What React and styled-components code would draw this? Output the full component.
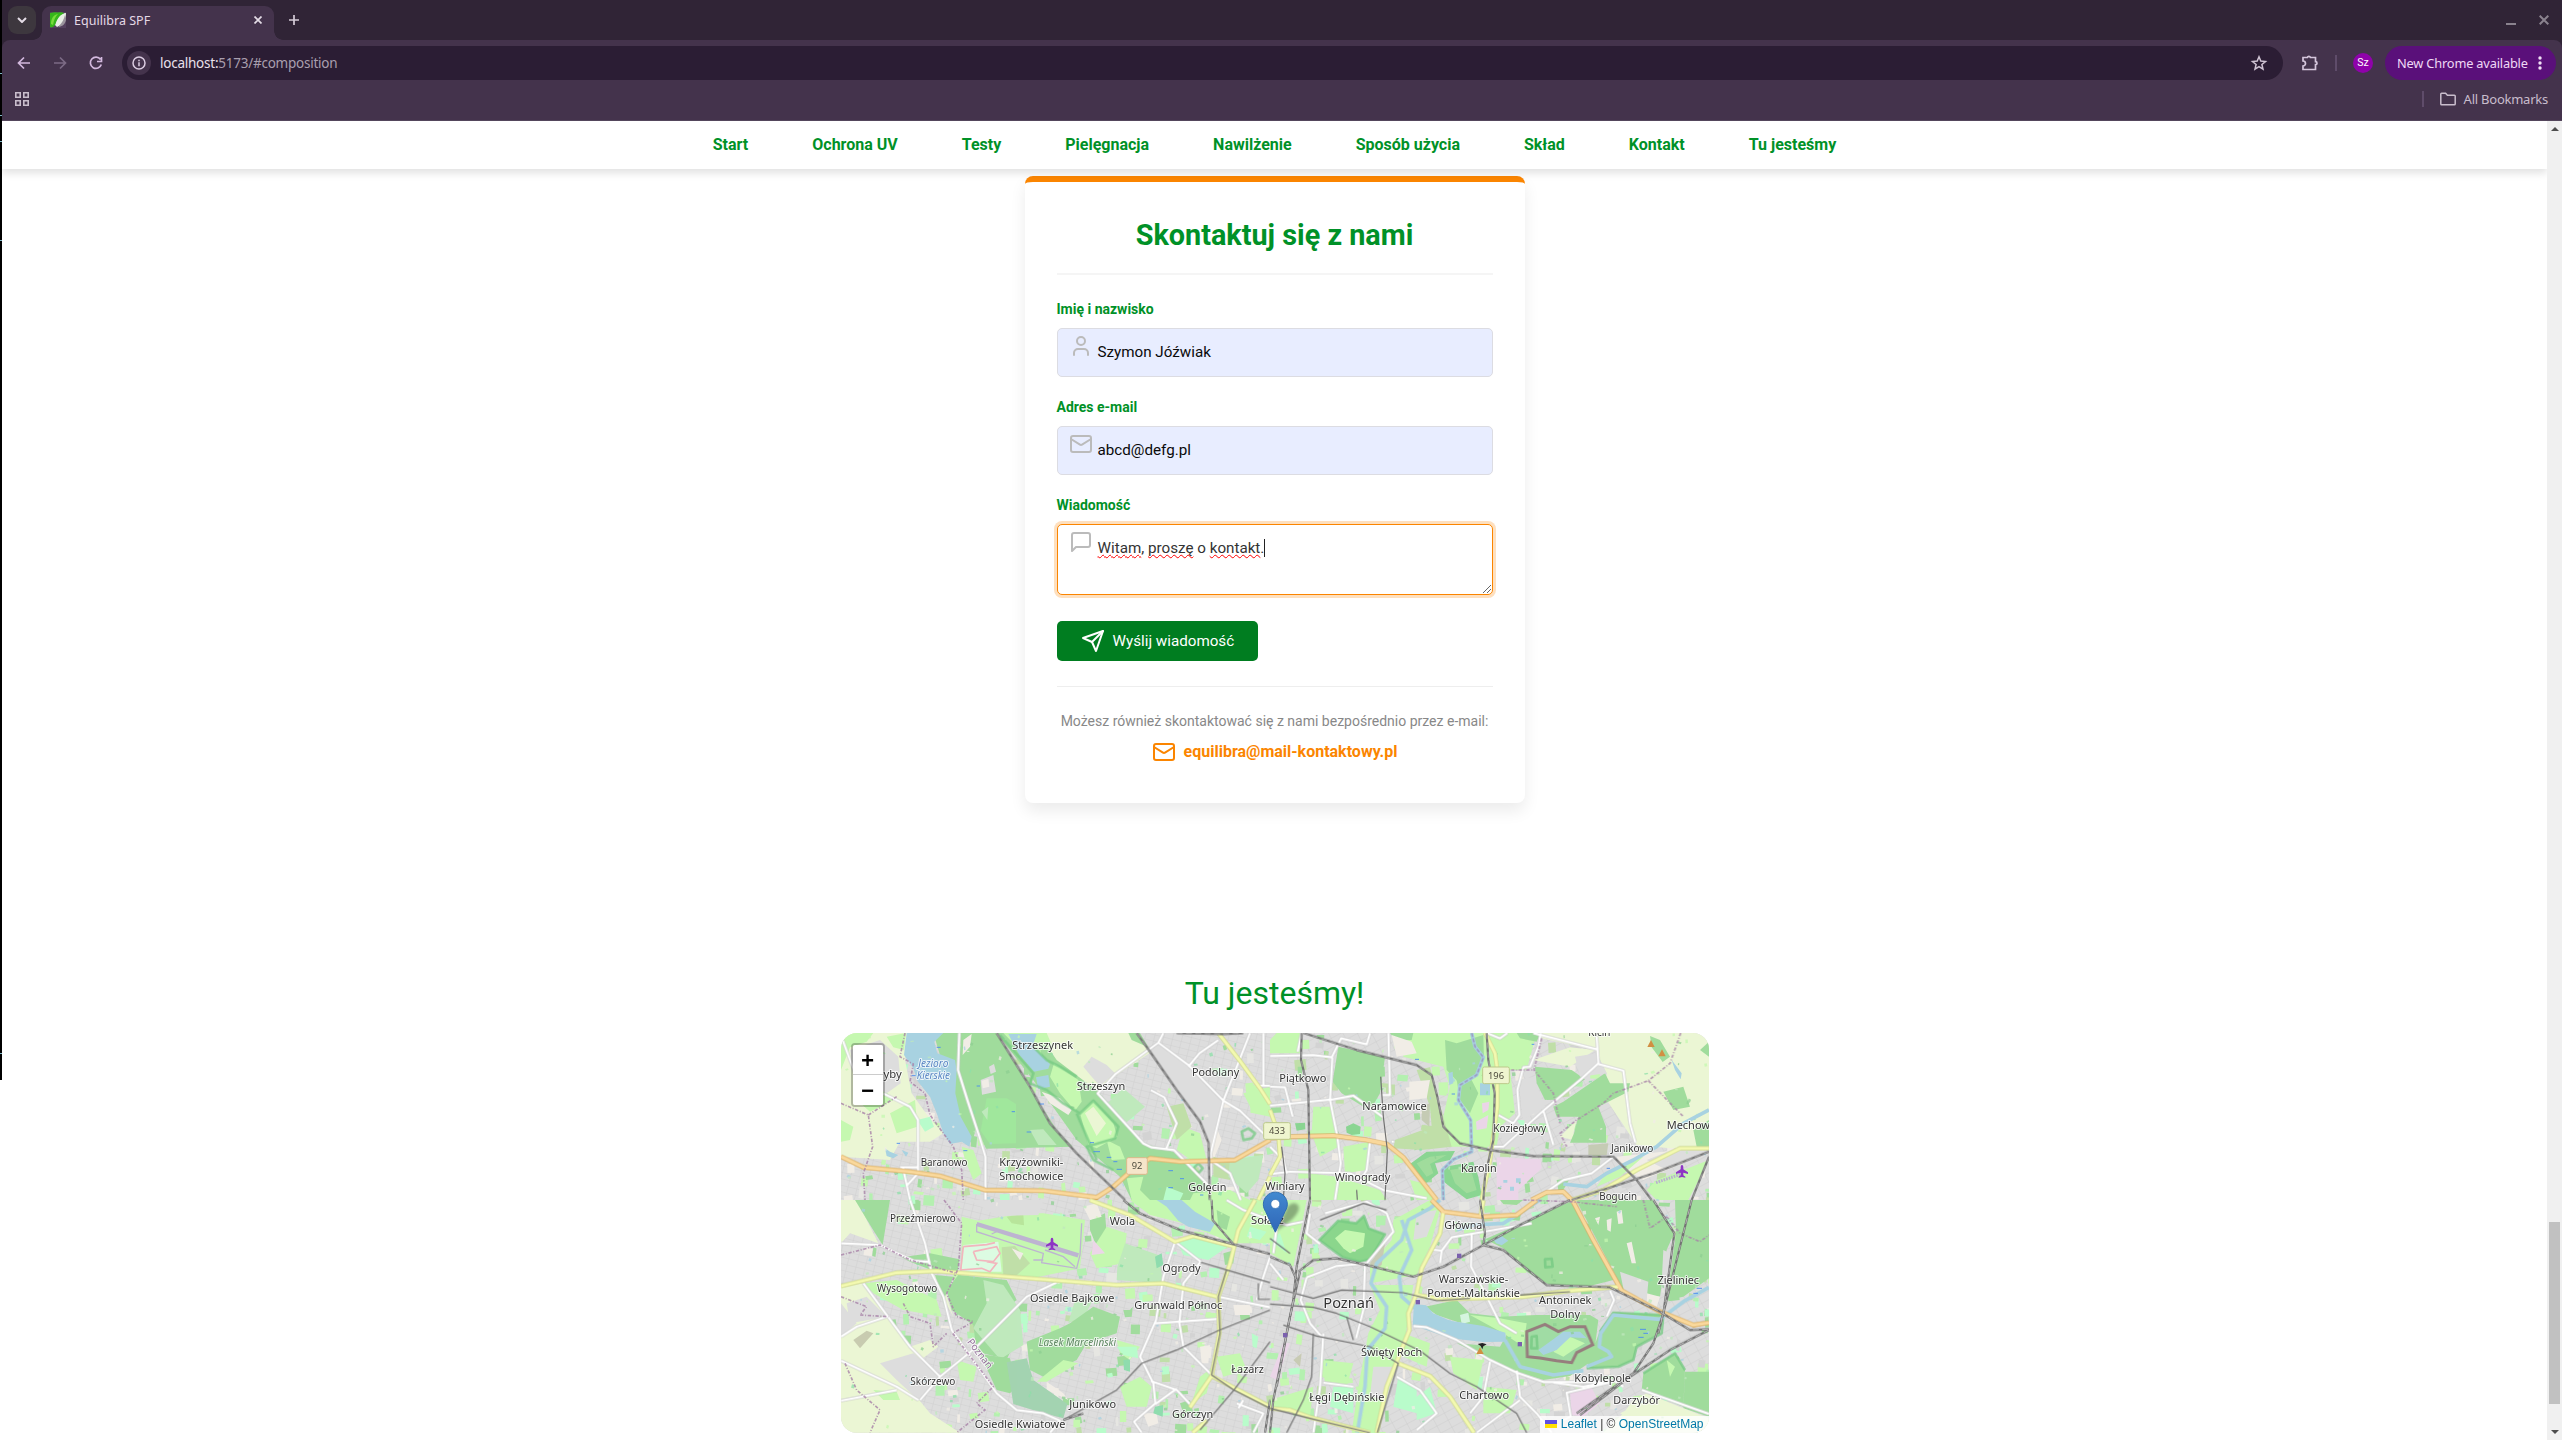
import React from "react";
import styled, { createGlobalStyle } from "styled-components";

const GlobalStyle = createGlobalStyle`
  *, *::before, *::after { box-sizing: border-box; }
  html, body { margin: 0; padding: 0; background: #fff; overflow: hidden; }
  body { font-family: Roboto, "Liberation Sans", sans-serif; }
`;

const GREEN = "#009127";
const ORANGE = "#fb8500";
const FRAME = "#44334c";

/* ---------- browser window ---------- */

const Screen = styled.div`
  display: flex;
  width: 2562px;
  height: 1440px;
  background: #fff;
  overflow: hidden;
`;

const DesktopEdge = styled.div`
  width: 2px;
  height: 1080px;
  flex: none;
  background:
    linear-gradient(#7fb8c8, #7fb8c8) 0 73px / 2px 1px no-repeat,
    linear-gradient(#7fb8c8, #7fb8c8) 0 115px / 2px 1px no-repeat,
    linear-gradient(#7fb8c8, #7fb8c8) 0 141px / 2px 1px no-repeat,
    linear-gradient(#7fb8c8, #7fb8c8) 0 240px / 2px 1px no-repeat,
    linear-gradient(#7fb8c8, #7fb8c8) 0 1053px / 2px 1px no-repeat,
    #000;
`;

const Browser = styled.div`
  flex: 1;
  display: flex;
  flex-direction: column;
  background: #302436;
  font-family: "Noto Sans", "Open Sans", sans-serif;
`;

const TabStrip = styled.div`
  height: 40px;
  display: flex;
  align-items: flex-start;
  padding: 6px 13px 0 6px;
`;

const TabSearch = styled.div`
  width: 28px;
  height: 28px;
  border-radius: 9px;
  background: #3d373e;
  display: grid;
  place-items: center;
`;

const Tab = styled.div`
  position: relative;
  width: 232px;
  height: 34px;
  margin-left: 6px;
  padding: 0 12px 6px 8px;
  border-radius: 9px 9px 0 0;
  background: ${FRAME};
  display: flex;
  align-items: center;
  color: #e4d9e6;

  &::before, &::after {
    content: "";
    position: absolute;
    bottom: 0;
    width: 9px;
    height: 9px;
  }
  &::before { left: -9px; background: radial-gradient(circle at 0 0, transparent 8.5px, ${FRAME} 9px); }
  &::after { right: -9px; background: radial-gradient(circle at 100% 0, transparent 8.5px, ${FRAME} 9px); }
`;

const TabTitle = styled.span`
  flex: 1;
  margin-left: 8px;
  font-size: 12.5px;
  letter-spacing: 0.03px;
  white-space: nowrap;
`;

const NewTab = styled.div`
  width: 28px;
  height: 28px;
  margin-left: 6px;
  display: grid;
  place-items: center;
`;

const WindowButtons = styled.div`
  margin-left: auto;
  height: 28px;
  display: flex;
  align-items: center;
  gap: 23px;
`;

const Toolbar = styled.div`
  height: 46px;
  display: flex;
  align-items: center;
  padding: 0 4px 0 12px;
  background: ${FRAME};
  border-radius: 8px 8px 0 0;
`;

const NavIcons = styled.div`
  display: flex;
  gap: 16px;
  margin-right: 16px;
`;

const AddressBar = styled.div`
  width: 2161px;
  height: 34px;
  border-radius: 17px;
  background: #2b1d34;
  display: flex;
  align-items: center;
  padding: 0 14px 0 5px;
`;

const SiteInfo = styled.div`
  width: 24px;
  height: 24px;
  border-radius: 50%;
  background: ${FRAME};
  display: grid;
  place-items: center;
`;

const Url = styled.span`
  flex: 1;
  margin-left: 9px;
  font-size: 13.5px;
  letter-spacing: -0.24px;
  color: #a99fae;
  b { font-weight: 400; color: #e9e0eb; }
`;

const Divider = styled.div`
  width: 2px;
  height: 16px;
  background: #5f4c6a;
  margin: ${(p) => p.$margin};
`;

const Extensions = styled.div`
  display: flex;
  margin-left: 18px;
`;

const Avatar = styled.div`
  width: 20px;
  height: 20px;
  border-radius: 50%;
  background: #8f02aa;
  color: #fff;
  font: 10.5px/20px Roboto, sans-serif;
  text-align: center;
`;

const UpdateButton = styled.div`
  width: 171px;
  height: 34px;
  margin-left: 12px;
  padding: 0 12px;
  border-radius: 17px;
  background: #5a107a;
  color: #efd9f6;
  display: flex;
  align-items: center;
  justify-content: space-between;
  font-size: 12.8px;
  letter-spacing: -0.18px;
  white-space: nowrap;
`;

const BookmarkBar = styled.div`
  height: 35px;
  display: flex;
  align-items: center;
  padding: 0 14px 8px 13px;
  background: ${FRAME};
  border-bottom: 1px solid #54465c;
  color: #c9bdcc;
  font-size: 13px;
  letter-spacing: -0.24px;
  > :nth-child(2) { margin-left: auto; }
`;

const BookmarkLabel = styled.span`
  margin-left: 8px;
`;

/* ---------- page ---------- */

const Viewport = styled.div`
  flex: 1;
  display: flex;
  background: #fff;
  font-family: Roboto, "Liberation Sans", sans-serif;
  min-height: 0;
`;

const Page = styled.div`
  flex: 1;
  display: flex;
  flex-direction: column;
  align-items: center;
  overflow: hidden;
`;

const SiteNav = styled.nav`
  position: relative;
  z-index: 1;
  flex: none;
  align-self: stretch;
  height: 48px;
  padding-bottom: 1px;
  display: flex;
  justify-content: center;
  align-items: center;
  gap: 64px;
  background: #fff;
  box-shadow: 0 4px 8px rgba(0, 0, 0, 0.12);
`;

const NavLink = styled.a`
  color: ${GREEN};
  font-size: 16px;
  line-height: 19px;
  font-weight: 700;
`;

const Card = styled.div`
  flex: none;
  width: 500px;
  height: 627px;
  margin-top: 7px;
  padding: 36px 32px 0;
  border-top: 6px solid ${ORANGE};
  border-radius: 8px;
  background: #fff;
  box-shadow: 0 8px 16px rgba(0, 0, 0, 0.08);
`;

const CardTitle = styled.h2`
  margin: 0 0 26px;
  height: 57px;
  border-bottom: 2px solid #f5f5f5;
  color: ${GREEN};
  font-size: 28.8px;
  line-height: 34px;
  font-weight: 700;
  text-align: center;
`;

const Field = styled.div`
  margin-bottom: 22px;
`;

const Label = styled.label`
  display: block;
  height: 27px;
  color: ${GREEN};
  font-size: 14px;
  line-height: 17px;
  font-weight: 700;
`;

const Control = styled.div`
  position: relative;
  display: flex;
  height: ${(p) => (p.$focused ? 71 : 49)}px;
  padding: 5px 11px;
  border: 1px solid ${(p) => (p.$focused ? ORANGE : "#dcdce2")};
  border-radius: 5px;
  background: ${(p) => (p.$focused ? "#fff" : "#e8edff")};
  box-shadow: ${(p) => (p.$focused ? "0 0 0 3px rgba(251, 133, 0, 0.25)" : "none")};
  color: ${(p) => (p.$focused ? "#333" : "#0a0a0a")};
  font-size: 15.2px;
  line-height: 18px;
  > svg { flex: none; }
`;

const Value = styled.span`
  margin: 9px 0 0 5px;
  white-space: nowrap;
`;

const Misspelt = styled.span`
  text-decoration: underline wavy #f00 1.3px;
  text-decoration-skip-ink: none;
  text-underline-offset: 1px;
`;

const Caret = styled.i`
  display: inline-block;
  width: 1px;
  height: 18px;
  background: #222;
  vertical-align: -4px;
`;

const Grip = styled.svg`
  position: absolute;
  right: 1px;
  bottom: 1px;
`;

const SubmitButton = styled.button`
  display: flex;
  align-items: center;
  width: 201px;
  height: 40px;
  margin: 26px 0 25px;
  padding: 0 0 0 24px;
  gap: 8px;
  border: 0;
  border-radius: 5px;
  background: #007d20;
  color: #fff;
  font: 15.2px/18px Roboto, sans-serif;
  white-space: nowrap;
`;

const CardFooter = styled.div`
  border-top: 1px solid #eee;
  padding-top: 26px;
  color: #888;
  font-size: 14px;
  line-height: 17px;
  text-align: center;
  white-space: nowrap;
`;

const MailLink = styled.a`
  display: flex;
  justify-content: center;
  align-items: center;
  gap: 8px;
  margin-top: 10px;
  color: ${ORANGE};
  font-size: 16px;
  line-height: 24px;
  font-weight: 700;
`;

const SectionTitle = styled.h2`
  flex: none;
  margin: 171px 0 21px;
  color: ${GREEN};
  font-size: 32px;
  line-height: 38px;
  font-weight: 400;
`;

const MapFrame = styled.div`
  position: relative;
  flex: none;
  width: 868px;
  height: 400px;
  border-radius: 16px;
  overflow: hidden;
  > svg { display: block; }
`;

const ZoomControl = styled.div`
  position: absolute;
  left: 10px;
  top: 10px;
  width: 34px;
  border: 2px solid rgba(0, 0, 0, 0.25);
  border-radius: 4px;
  background-clip: padding-box;
`;

const ZoomButton = styled.div`
  height: 30px;
  border-bottom: ${(p) => (p.$first ? "1px solid #ccc" : "0")};
  border-radius: ${(p) => (p.$first ? "2px 2px 0 0" : "0 0 2px 2px")};
  background: #fff;
  color: #000;
  font: bold 22px/36px "Liberation Mono", monospace;
  text-align: center;
`;

const Attribution = styled.div`
  position: absolute;
  right: 0;
  bottom: 0;
  height: 17px;
  padding: 0 5px;
  background: rgba(255, 255, 255, 0.8);
  color: #333;
  font: 12px/17px "Liberation Sans", sans-serif;
  white-space: nowrap;
  a { color: #0078a8; }
  svg { margin-right: 4px; }
`;

const ScrollTrack = styled.div`
  width: 15px;
  display: flex;
  flex-direction: column;
  align-items: center;
  justify-content: space-between;
  padding: 6px 0;
  background: #f0f0f0;
`;

const ScrollThumb = styled.div`
  width: 11px;
  height: 182px;
  margin-top: auto;
  margin-bottom: 26px;
  background: #c1c1c1;
`;

const Arrow = styled.i`
  border: 4px solid transparent;
  border-top-width: ${(p) => (p.$up ? 0 : 4)}px;
  border-bottom-width: ${(p) => (p.$up ? 4 : 0)}px;
  border-${(p) => (p.$up ? "bottom" : "top")}-color: #4d4d4d;
`;

/* ---------- icons ---------- */

const Line = ({ size = 24, w = 2, color = "currentColor", box = 24, children }) => (
  <svg width={size} height={size} viewBox={`0 0 ${box} ${box}`} fill="none" stroke={color} strokeWidth={w} strokeLinecap="round" strokeLinejoin="round">
    {children}
  </svg>
);

const UserIcon = () => (
  <Line color="#bbb"><circle cx="12" cy="7" r="4" /><path d="M19 21v-2a4 4 0 0 0-4-4H9a4 4 0 0 0-4 4v2" /></Line>
);
const MailIcon = ({ color }) => (
  <Line color={color}><rect x="2" y="4" width="20" height="16" rx="2" /><path d="m22 7-8.97 5.7a1.94 1.94 0 0 1-2.06 0L2 7" /></Line>
);
const MessageIcon = () => (
  <Line color="#bbb"><path d="M21 15a2 2 0 0 1-2 2H7l-4 4V5a2 2 0 0 1 2-2h14a2 2 0 0 1 2 2z" /></Line>
);
const SendIcon = () => (
  <Line><path d="m22 2-7 20-4-9-9-4Z" /><path d="M22 2 11 13" /></Line>
);

const Sharp = ({ w = 16, h = 16, color = "#d5c6dc", sw = 1.7, children }) => (
  <svg width={w} height={h} viewBox={`0 0 ${w} ${h}`} fill="none" stroke={color} strokeWidth={sw}>{children}</svg>
);

/* ---------- map ---------- */
/* Drawn on a 3x grid; each quadrant has its own origin. */

const ORIGIN = { nw: [0, 0], ne: [1320, 0], sw: [0, 720], se: [1320, 720] };

const FOREST = "#a1dc9d";
const GRASS = "#c5f8b0";
const FARM = "#ebf6d4";
const WATER = "#a8d2e1";
const PALE = "#bfe9bd";
const OLIVE = "#c0dfa9";
const MINT = "#b9fccb";
const TOWN = "#dddddd";
const SAND = "#f1ede6";

const AREAS = {
  nw: [
    [FARM, "M33 219H235L225 300 245 400 295 470 340 520 300 545 210 545 180 600 33 590Z"],
    [GRASS, "M33 219H130L110 245 60 262 33 330ZM170 230 228 219 222 270 190 262ZM70 410 160 385 190 420 120 455ZM180 460 255 420 262 500 200 520ZM33 480 70 500 60 540 33 545Z"],
    [TOWN, "M60 270 150 240 205 290 212 370 170 400 110 372 70 330Z"],
    [MINT, "M262 480 300 470 312 500 285 515Z"],
    [WATER, "M165 565 180 575 205 585 190 595 170 588ZM215 570 235 578 228 590Z"],
    [FOREST, "M310 219H500L600 385 680 510 728 560 468 566 440 500 425 550 400 520Z"],
    ["#a0e79c", "M470 415 530 415 558 432V550L480 552 452 512Z"],
    [PALE, "M600 510 640 508 680 555 625 555ZM455 455 475 440 472 480Z"],
    [TOWN, "M477 320 492 312 498 335 482 342ZM452 360 490 345 498 395 456 404Z"],
    [SAND, "M400 240 425 222 420 260 398 285ZM455 362 475 357 478 380 458 385Z"],
    [WATER, "M230 219H340L313 245 322 280 375 300 380 330 376 400 392 470 425 530 418 560 395 545 360 552 340 520 322 465 300 410 262 362 250 325 222 285Z"],
    [GRASS, "M395 560 430 570 455 640 430 660 405 600Z"],
    [FARM, "M650 219H925L960 278 860 345 805 390 740 350 670 300 630 240Z"],
    [TOWN, "M760 320 785 290 830 315 855 340 810 378 785 350Z"],
    [FOREST, "M500 219H625L680 300 805 395 940 550 1030 575 1075 620 1135 680V720H905L870 650 740 540 640 400Z"],
    [FOREST, "M895 219H930L955 262 905 240Z"],
    [GRASS, "M520 219 650 219 670 265 625 250 640 300 560 260Z"],
    [WATER, "M535 222H620L608 258 640 290 660 312 655 326 612 335 568 285ZM618 352 655 345 660 380 625 388Z"],
    [GRASS, "M672 310 745 360 755 425 735 452 690 400 660 350ZM750 458 790 422 850 490 862 530 800 565 775 555ZM830 540 870 560 885 598 845 600Z"],
    [FARM, "M765 460 790 440 828 490 800 528Z"],
    [SAND, "M635 395 690 415 725 450 715 465 660 430ZM1120 490 1150 480 1175 540 1150 600 1128 540Z"],
    [PALE, "M880 385 945 440 890 487 832 430Z"],
    [TOWN, "M985 245 1080 310 1180 420 1140 560 1135 540 1040 400 960 285Z"],
    [GRASS, "M890 655 940 650 930 690 960 720 905 720ZM1060 500 1110 520 1130 600 1090 605 1040 570Z"],
    [OLIVE, "M1010 440 1060 430 1085 500 1040 540ZM1150 590 1210 610 1200 660 1150 650Z"],
    [PALE, "M1200 600 1300 585 1285 660 1250 700 1195 650Z"],
    [GRASS, "M1240 400 1320 380V470L1270 460ZM1090 700 1200 690 1260 720H1080Z"],
    [MINT, "M1010 680 1060 700 1050 720H1000Z"],
  ],
  ne: [
    [GRASS, "M380 219H800L770 330 720 330 735 460 690 500 680 560H540L520 470 540 380 520 320 400 290Z"],
    [GRASS, "M20 219H90V280H0V240ZM130 440H190L205 560 150 590 125 520ZM220 560 300 545 290 630 225 640ZM120 640 200 650 330 690 350 720H120Z"],
    [FARM, "M812 219H1317V560L1200 565 1100 555 1010 420 1010 340 975 270 815 235ZM790 300 900 262 975 270 900 320Z"],
    [FARM, "M870 530 920 480 910 520 930 545Z"],
    [FOREST, "M525 240 560 250 640 225 642 300 620 345 570 372 530 330ZM205 260 250 270 345 292 330 400 300 452 215 400 188 365Z"],
    [FOREST, "M795 320 905 330 945 358 870 412 825 420 800 370ZM850 440 880 425 1005 340 1020 370 1080 370 1075 395 985 440 1008 500V548L900 548 912 520 925 470 860 470ZM740 219H812L800 245 750 235ZM560 360 600 350 625 400 600 460 570 420Z"],
    [FOREST, "M1140 228 1170 240 1200 290 1178 306 1145 262ZM1180 395 1240 380 1260 440 1210 450ZM1270 510 1317 480V570L1280 560ZM1290 270 1317 245V290ZM360 219H430L425 240H375Z"],
    [OLIVE, "M440 330 480 322 500 400 520 470 545 560 455 570 370 565 375 540 485 500 480 440Z"],
    ["#c5cbb4", "M455 440 480 430 478 500 455 480ZM955 555 1015 550 1010 585H955Z"],
    [SAND, "M365 225 425 245 440 280 380 290ZM418 365 480 360 470 415 418 420ZM1040 590 1317 560 1260 600 1120 660 1060 625Z"],
    [TOWN, "M745 360 790 350 825 440 760 480ZM915 290 980 280 1010 340 930 350ZM1130 600 1230 560 1317 575 1180 625ZM690 500 740 480 800 560H700Z"],
    ["#ebd5e8", "M680 592 812 598 815 625 745 690V720H680ZM636 430 658 425 655 450 638 460ZM618 485 655 465 650 505 620 510Z"],
    [WATER, "M630 370H660V406H630ZM535 340 548 335 550 370 538 375ZM1205 300 1235 340 1232 358 1215 330ZM700 660H712V668H700ZM738 655H752V668H738ZM720 680H732V692H720Z"],
    ["#8ad592", "M420 612 470 575 555 573 540 600 495 610 505 640 470 668 430 640ZM525 620 610 605 625 650 635 705 590 718 540 680 515 660ZM228 500 250 490 272 500 270 522 245 525 230 518ZM75 490 105 488 106 508 80 512Z"],
    [FOREST, "M440 610 480 590 530 585 480 612 490 640 470 650ZM540 630 600 620 620 690 590 700 555 670Z"],
    [GRASS, "M1317 600 1240 630 1160 660 1130 690 1160 720H1255ZM1080 600 1120 590 1050 650 980 680 1000 650ZM420 660 460 670 500 720H440Z"],
    [FOREST, "M860 660 900 655 880 690 865 690Z"],
  ],
  sw: [
    [FARM, "M33 0H80L145 130 60 100 33 130ZM33 262 100 250 240 440 300 420 325 440 245 500 235 560 300 640 390 698H33ZM300 220 350 240 350 290 370 350Z"],
    [FOREST, "M75 0H180L158 135 128 88ZM215 172 300 160 388 178 383 215 310 212 240 185ZM315 225 370 230 345 290 350 340Z"],
    [TOWN, "M50 310 110 290 170 350 60 370ZM150 490 250 460 330 530 265 600 200 540ZM33 310 80 370 33 410Z"],
    ["#c8cbb0", "M70 420 110 392 130 400 90 445Z"],
    [GRASS, "M100 250 200 240 320 300 335 350 220 330 130 280ZM130 570 200 575 210 600 160 600ZM380 480 440 500 430 545 390 540Z"],
    [GRASS, "M395 50 445 62 580 40H640L765 60 750 205 620 232 510 222 395 215Z"],
    ["#b8e59b", "M530 50 580 42 582 76 545 70Z"],
    [TOWN, "M420 0H640L625 45 500 48Z"],
    ["#dcfbe2", "M400 135 505 125 515 215H395Z"],
    [OLIVE, "M515 142 555 138 600 190 560 226H520Z"],
    [FOREST, "M780 60 825 40 830 100 800 140 780 90ZM385 225 530 240 560 300 520 330 560 420 530 478 440 455 430 375 365 330 350 270Z"],
    [GRASS, "M830 80 890 100 880 190 800 205 780 160Z"],
    [SAND, "M760 20 800 10 815 50 780 60ZM545 145 580 160 570 180ZM650 545 700 580 715 600 650 570Z"],
    ["#ecd6e8", "M790 120 825 160 785 165Z"],
    [PALE, "M885 130 985 165 1000 250 860 240 862 200ZM460 240 520 255 570 330 580 435 510 478 430 385 470 310ZM735 300 790 298 765 345 715 370Z"],
    [FOREST, "M590 425 690 385 720 370 790 320 870 350 860 400 770 430 740 480 640 530 600 510ZM450 462 540 475 560 560 540 580 500 570Z"],
    [GRASS, "M620 545 700 480 745 490 650 545ZM860 420 930 440 900 480 870 460ZM870 560 930 530 965 560 950 620 890 620ZM1160 470 1230 460 1250 510 1180 530ZM1110 530 1150 500 1130 580 1085 610Z"],
    ["#a3d3b1", "M530 487 590 475 610 540 712 612 700 655 640 640 550 612Z"],
    [GRASS, "M900 0H1320V130L1210 130 1060 70 960 45Z"],
    [WATER, "M980 0H1055L1095 35 1155 70 1140 96 1075 80 1045 62 1010 20Z"],
    [FOREST, "M1160 30 1200 50 1190 90 1165 80ZM900 330 908 320 905 350 885 352 880 330ZM1050 610 1080 600 1090 640 1060 640ZM1180 160 1215 150 1210 190 1185 195Z"],
    [MINT, "M1042 128 1100 108 1200 135 1135 180 1060 165ZM1260 80 1310 95 1290 120 1250 110ZM860 440 920 440 925 475 880 465Z"],
    [SAND, "M1210 315H1260V345H1215ZM1110 440 1140 435 1135 490 1115 490ZM940 640 980 640 985 670 955 680Z"],
    [MINT, "M1265 400 1285 410 1280 445 1268 440Z"],
    ["#8fdcae", "M975 170 995 160 1000 195 980 205ZM975 620 1000 615 998 650 970 640ZM880 480 900 478 900 515 882 510Z"],
  ],
  se: [
    [GRASS, "M370 60 480 0 510 30 480 140 440 225 300 250 300 195 365 120ZM300 255 430 255 400 450 380 480 320 698H245L265 560 295 400 330 330ZM0 0H110L70 200 0 160ZM155 480 250 490 230 560 165 548ZM400 400 480 430 470 500 400 470Z"],
    [MINT, "M190 560H250V640L180 620ZM440 590 480 560 500 640 440 660ZM590 530 640 530 635 570ZM0 120 30 100 50 160ZM385 530 440 570 440 640 370 620Z"],
    [TOWN, "M310 500 370 500 345 600 300 590ZM440 40 500 30 470 110 430 120Z"],
    ["#8bd68d", "M148 120 205 62 258 70 282 48 296 85 345 103 318 148 300 178 270 186 218 172Z"],
    [GRASS, "M195 115 225 90 285 100 280 140 240 160 220 145Z"],
    ["#c8cbb4", "M300 190 345 130 335 195 310 210ZM70 480 95 460 90 500Z"],
    [FOREST, "M645 118 900 5 915 20 1030 240 960 258 840 256 770 215 700 145ZM918 0H1150L1212 100 1190 150 1170 290 1062 275ZM1215 0H1317V235L1240 290 1190 300 1218 100ZM690 0H760L740 15 700 12Z"],
    [SAND, "M1010 60 1025 55 1022 95 1012 90ZM1040 35 1055 30 1060 70 1045 72ZM1070 130 1085 125 1098 190 1085 190ZM975 55 990 50 985 75ZM1130 280 1170 290 1160 320 1130 310Z"],
    [TOWN, "M1050 215 1135 245 1130 300 1062 275ZM1180 150 1200 160 1190 300 1175 250Z"],
    [FOREST, "M465 320 560 300 600 340 690 350 800 345 960 345 985 360 970 480 900 528 820 540 740 515 560 430 690 440 712 400 560 365 500 345ZM990 390 1030 338 1180 345 1170 400 1100 440 1090 480 1045 500 950 505ZM1120 520 1215 460 1245 510 1240 620 1115 570ZM1245 515H1317V650L1240 625Z"],
    [GRASS, "M600 345 690 355 770 370 760 440 700 400ZM540 470 640 480 620 570 550 520ZM640 560 740 570 720 640 640 640ZM1190 480 1215 500 1200 530ZM0 600 130 560 120 650 0 620Z"],
    ["#d5f5df", "M570 345 595 338 600 365 575 372Z"],
    [WATER, "M432 312 468 316 490 340 540 362 640 378 706 398 708 425 640 426 540 415 428 376ZM670 118 695 108 715 122 695 136 678 130Z"],
    ["#a1dca4", "M770 395 825 373 865 395 900 380 945 380 968 434 920 458 905 488 860 482 810 474 772 470Z"],
    [GRASS, "M850 455 900 410 945 430 910 450 880 470Z"],
    [WATER, "M805 450 850 418 880 395 930 395 950 415 900 412 860 450 820 465Z"],
    ["#ebd5e8", "M900 575 960 555 990 610 940 650 905 645ZM40 430 60 430 20 540 0 530Z"],
    [FARM, "M1090 600 1130 580 1240 625 1317 655V698H1000L1060 640ZM1050 640 1090 620V660Z"],
  ],
};

const WATERWAYS = {
  nw: [],
  ne: ["M605 219 615 260 640 292 620 345 570 375 565 420 602 480 605 575 550 598 517 630 520 720", "M1317 450 1240 490 1160 560 1090 600 1010 640 950 680 880 672"],
  sw: [],
  se: ["M510 0 480 25 415 60 395 120 320 190 303 250 350 320 345 385 292 450 285 560 262 698", "M395 60 425 150 388 230 395 290 435 325", "M705 420 750 500 850 525 940 512", "M950 500 1025 470 1015 455 988 440 992 400 1030 345 1170 358 1240 305 1317 262", "M560 90 610 75 700 70 810 0"],
};

const WHITE_ROADS = {
  nw: ["M388 219 384 330 412 420 448 530 466 590V720", "M36 235 60 300 75 340M160 400 240 440 264 480V640L232 675M218 620 240 720M210 622H265", "M1000 219 985 248 855 343 803 400 940 550 965 562 1032 570 1100 640 1140 680", "M985 248 1075 315 1180 422 1230 452 1320 540", "M962 390 1003 412 1040 490 1008 568", "M1165 240 1108 280 1075 320M1260 219 1180 422 1142 580V650", "M1300 219V375M1280 377H1320", "M1232 720 1200 640 1142 600"],
  ne: ["M0 288 130 285 185 292 213 235 290 253 300 219", "M187 292 180 420 202 530 212 610 195 720", "M0 437 190 418 250 407 340 472M355 219 360 405H335", "M0 642 60 635 240 640 340 690 470 715", "M300 545 290 630 268 665M0 380 45 382 68 470M0 560 40 600 50 640", "M812 219 805 260 780 320 760 322 742 390 748 465 730 490 685 465", "M790 219 980 268M980 230 985 310 930 360 820 452 700 560H660M820 452 850 555", "M985 312 1060 332 1080 490 1096 548M650 219 690 235 712 219", "M1030 590 965 640 880 660 830 695M95 219 83 275M365 545 372 545"],
  sw: ["M240 0 285 130 305 220 340 290 365 390 500 580 560 630 640 640 690 662 660 698", "M33 130 150 135 250 182 300 186", "M100 250 240 440 330 530M270 600 330 530 440 440 590 290 680 247", "M33 482 200 560 265 600M33 602 200 570M33 410 80 380 170 350", "M1035 125 1000 230 978 360 930 470 970 550 976 610 912 665 935 698", "M1035 125 1112 185 1060 250 1048 370 1060 440 1145 525", "M975 370 1160 357M962 543 1040 570 1085 618M1165 290 1320 322M976 612 1040 566", "M1320 170 1300 230 1280 300M1220 610 1300 640 1270 698M1240 600 1225 625", "M1190 0 1240 30 1320 60"],
  se: ["M110 232 200 198 288 190M285 190 280 330 258 415M110 232 92 300 120 370 155 410", "M430 378 470 382 560 420 660 480 740 518 820 546H1000", "M740 512 750 590 800 640 845 698M660 485 640 590 600 640", "M480 148 515 152 545 112 660 92 785 70M605 100 603 200 640 270 690 370 740 400", "M515 152 510 190M1020 272 1032 300 1010 350M380 530 450 570 500 640 440 690", "M160 400 150 560 130 698M160 548 250 560M1030 545 890 578 902 650 880 660", "M1115 570 1317 642M120 40 110 100 150 132M165 40 290 5 350 40 370 95 290 190", "M0 60 50 75 100 65M20 80 10 160M0 190 40 240M850 548 940 560 1000 548", "M750 600 620 698M1030 540 1060 560"],
};

const YELLOW_ROADS = {
  nw: ["M1165 219 1228 300 1290 385 1320 432", "M1320 650 1285 720"],
  ne: ["M645 219 675 280 682 330V440L660 600 635 720", "M0 450 25 520 30 590 0 645", "M905 720 1000 690 1100 630 1230 565H1317"],
  sw: ["M33 258 200 218 320 213 560 232 860 255 1000 250 1160 290", "M780 0 900 45 1035 125 1090 108 1212 140", "M1275 0 1225 90 1200 190 1165 290 1168 400 1145 528 1080 622", "M1145 528 1320 620M1130 662 1088 698"],
  se: ["M520 35 510 100 455 205 440 280 415 340 418 390 350 560 320 698", "M440 285 520 298 760 290 900 272 1045 260", "M385 490 480 528 540 590 612 698", "M0 625 60 630 120 652 300 698M640 0 632 48"],
};

const ORANGE_ROADS = {
  nw: ["M33 590 100 622 240 635 330 648 465 690 640 692 800 712 850 680 895 640 960 595 1050 605 1215 600 1320 540"],
  ne: ["M0 535 60 530 190 527 290 540 350 552 400 592 500 720", "M785 720 830 697 880 695 905 720"],
  sw: [],
  se: ["M485 0 520 35 640 50 740 45 800 0", "M907 0 970 120 1055 272 1170 335 1270 375 1317 368"],
};

const RAILS = {
  nw: ["M500 219 600 380 660 490 740 580 885 720", "M920 219 960 275 1040 390 1110 485 1136 550 1139 720", "M1040 219 1180 222 1240 219"],
  ne: ["M100 219 260 270 440 315 485 345 502 410 520 500 570 550 660 570 790 588 1030 590 1100 660 1145 720", "M95 219 93 300 115 390 120 720", "M650 219 655 300 674 400 670 540 645 650 640 720", "M1317 575 1150 640 905 720M1317 590 1265 720"],
  sw: ["M880 0 930 40 1050 90 1200 130 1320 162", "M1145 0 1148 60 1210 132", "M1320 600 1305 698", "M700 660 760 640"],
  se: ["M120 0 80 200 70 300 40 450 10 600 0 698", "M0 170 60 195 80 240M85 215 130 180 200 175 290 195 430 230 520 200 640 135 740 80 900 0", "M640 135 700 150 830 255 1020 262 1170 335 1260 390 1317 388", "M630 0 645 100 640 135M1150 0 1213 100 1180 340 1150 430 1090 520 920 640", "M1265 0 1180 340 1165 400M1317 390 1200 450 1080 530 930 645M90 215 60 350 20 560"],
};

const TRAMS = {
  nw: [],
  ne: ["M332 350 340 470 352 570 345 720", "M35 560 45 640 40 720M260 690 262 720"],
  sw: ["M1112 187 1190 210 1320 248", "M700 660 860 570 935 490 1040 450 1165 392 1320 330", "M1190 210 1165 290 1170 400 1145 525 1212 570 1320 625", "M1320 425 1212 570 1110 690", "M1285 250 1285 298H1320"],
  se: ["M0 260 130 295 215 270 400 278 500 302 600 295", "M0 312 130 322 200 340 300 380 450 452 540 520 620 560 740 640 770 698", "M40 375 140 408 300 440 385 490 322 698", "M130 400 125 530 100 600 50 698M230 350 250 420M0 625 120 655 300 698", "M150 60 280 10 350 30M750 285 900 275M0 115 60 160"],
};

const BORDERS = {
  nw: ["M225 219 210 290 250 312 240 365 285 400 300 465 340 520 370 560 395 630 400 720", "M33 430 115 465 128 560 100 640 105 720M115 465 200 410"],
  ne: ["M1232 219 1200 310 1135 362 1030 400 1000 430 920 480 870 520 890 560", "M1135 362 1240 470", "M815 235 792 330 850 400 870 490M700 330H790"],
  sw: ["M342 0 395 70 385 205 350 280 380 350 430 365 368 400 490 560 440 610 465 630 380 698", "M33 165 150 135 240 180 380 220", "M45 490 80 570 150 630 120 698M33 290 110 320 90 345 175 350M220 310 240 350 300 370 310 440 350 400"],
  se: ["M1120 0 1140 85 1190 50M1190 50 1230 100 1290 125 1317 105", "M760 0 900 5 1040 20"],
};

/* [quadrant, x, baseline, width, text, size] */
const LABELS = [
  ["nw", 118, 354, 97, "Chyby"], ["nw", 547, 266, 182, "Strzeszynek"], ["nw", 740, 388, 146, "Strzeszyn"],
  ["nw", 1086, 346, 142, "Podolany"], ["nw", 272, 618, 140, "Baranowo"], ["nw", 508, 618, 192, "Krzyżowniki-"],
  ["nw", 508, 660, 192, "Smochowice"], ["nw", 1075, 693, 114, "Golęcin"],
  ["ne", 28, 366, 141, "Piątkowo"], ["ne", 277, 448, 193, "Naramowice"], ["ne", 670, 515, 158, "Koziegłowy"],
  ["ne", 955, 227, 66, "Kicin"], ["ne", 1190, 506, 150, "Mechowo"], ["ne", 1023, 574, 127, "Janikowo"],
  ["ne", 573, 636, 107, "Karolin"], ["ne", 194, 662, 167, "Winogrady"], ["ne", -14, 688, 118, "Winiary"], ["ne", 988, 719, 113, "Bogucin"],
  ["sw", 180, 65, 197, "Przeźmierowo"], ["sw", 839, 74, 76, "Wola"], ["sw", 1263, 70, 98, "Sołacz"],
  ["sw", 141, 274, 181, "Wysogotowo"], ["sw", 997, 216, 115, "Ogrody"], ["sw", 600, 306, 253, "Osiedle Bajkowe"],
  ["sw", 913, 327, 264, "Grunwald Północ"], ["sw", 241, 553, 135, "Skórzewo"], ["sw", 718, 624, 140, "Junikowo"],
  ["sw", 1204, 518, 98, "Łazarz"], ["sw", 1026, 652, 124, "Górczyn"], ["sw", 434, 683, 272, "Osiedle Kwiatowe"],
  ["se", 523, 85, 114, "Główna"], ["se", 506, 248, 209, "Warszawskie-"], ["se", 472, 290, 278, "Pomet-Maltańskie"],
  ["se", 807, 311, 157, "Antoninek"], ["se", 841, 354, 89, "Dolny"], ["se", 1163, 252, 124, "Zieliniec"],
  ["se", 160, 323, 152, "Poznań", 43], ["se", 273, 467, 184, "Święty Roch"], ["se", 118, 602, 225, "Łęgi Dębińskie"],
  ["se", 568, 597, 149, "Chartowo"], ["se", 913, 545, 170, "Kobylepole"], ["se", 1030, 611, 140, "Darzybór"],
];

const random = (seed) => () => {
  seed = (seed * 16807) % 2147483647;
  return seed / 2147483647;
};

const scatter = (count, seed, colors, min, max) => {
  const next = random(seed);
  return Array.from({ length: count }, (_, i) => {
    const x = 33 + next() * 2604;
    const y = 219 + next() * 1200;
    const w = min + next() * (max - min);
    const h = min + next() * (max - min);
    const k = next() * 8 - 4;
    return <path key={i} fill={colors[Math.floor(next() * colors.length)]} d={`M${x} ${y}l${w} ${k}l${-k} ${h}l${-w} ${-k}z`} />;
  });
};

const PATCHES = scatter(1000, 77, [GRASS, GRASS, "#b4f0b0", FOREST, SAND, MINT, "#d3d3d3", "#e6e6e2", OLIVE], 7, 34);
const SPECKS = scatter(480, 991, [GRASS, "#8de0a8", PALE, SAND, "#8ecf92", WATER], 3, 11);

const Layer = ({ data, render }) =>
  Object.entries(ORIGIN).map(([q, [x, y]]) => (
    <g key={q} transform={`translate(${x} ${y})`}>{data[q].map(render)}</g>
  ));

const Strokes = ({ data, color, width, dash, opacity }) => (
  <g fill="none" stroke={color} strokeWidth={width} strokeDasharray={dash} opacity={opacity} strokeLinejoin="round">
    <Layer data={data} render={(d, i) => <path key={i} d={d} />} />
  </g>
);

const Shield = ({ x, y, w, fill, stroke, text }) => (
  <g>
    <rect x={x} y={y} width={w} height="50" rx="5" fill={fill} stroke={stroke} strokeWidth="3" />
    <text x={x + w / 2} y={y + 35} textAnchor="middle" fontSize="28" fill="#4d4a3c">{text}</text>
  </g>
);

const Plane = ({ x, y }) => (
  <path transform={`translate(${x} ${y})`} fill="#8d35c4" d="M0-19c3 0 4 4 4 8v5L18 3v5L4 4v8l6 4v3L0 17l-10 2v-3l6-4V4L-18 8V3L-4-6v-5c0-4 1-8 4-8z" />
);

const CityMap = () => (
  <svg width="868" height="400" viewBox="33 219 2604 1200" preserveAspectRatio="none" fontFamily='"Noto Sans", sans-serif'>
    <defs>
      <pattern id="gridA" width="27" height="19" patternUnits="userSpaceOnUse" patternTransform="rotate(14)">
        <path d="M0 0H27M0 0V19" stroke="#cacaca" strokeWidth="2.2" fill="none" />
      </pattern>
      <pattern id="gridB" width="38" height="24" patternUnits="userSpaceOnUse" patternTransform="rotate(-28)">
        <path d="M0 0H38M0 0V24" stroke="#cacaca" strokeWidth="2.2" fill="none" />
      </pattern>
      <linearGradient id="pin" x1="0" y1="0" x2="0" y2="1">
        <stop offset="0" stopColor="#4289d0" /><stop offset="1" stopColor="#2f66b8" />
      </linearGradient>
      <filter id="soft"><feGaussianBlur stdDeviation="5" /></filter>
    </defs>
    <rect x="33" y="219" width="2604" height="1200" fill={TOWN} />
    <rect x="33" y="219" width="1400" height="1200" fill="url(#gridA)" />
    <rect x="1433" y="219" width="1204" height="1200" fill="url(#gridB)" />
    {PATCHES}
    <Layer data={AREAS} render={([fill, d], i) => <path key={i} fill={fill} d={d} />} />
    <g opacity="0.75">{SPECKS}</g>

    <g fill="none" stroke="#74c982" strokeWidth="8" opacity="0.75" strokeLinejoin="round">
      <path d="M510 225 610 340 600 370 650 390 700 430 750 460 790 422 865 500 855 535 770 560 790 600 850 630M740 460 800 600M610 260 650 300 690 320 740 350M1235 515 1255 505 1275 520 1265 535 1240 540ZM1090 625 1105 610 1118 625 1105 640Z" />
      <path transform="translate(1320 720)" d="M990 395 1030 338 1180 345 1175 400 1100 440 1090 480 1045 500 950 505M1120 520 1215 460 1245 510M825 178 845 176 848 200 826 202ZM785 410 800 408 802 445 784 445ZM148 120 205 62 258 70 282 48 296 85 345 103 318 148 300 178 270 186 218 172Z" />
    </g>
    <path transform="translate(1320 720)" fill="none" stroke="#935f71" strokeWidth="9" opacity="0.75" d="M770 395 825 373 865 395 900 380 945 380 968 434 920 458 905 488 860 482 810 474 772 470Z" />

    <g transform="translate(0 720)" fill="none">
      <path stroke="#bdb4d1" strokeWidth="13" d="M440 72 745 166" />
      <path stroke="#bdb4d1" strokeWidth="4" d="M440 72V95L640 160 635 188 740 205 750 165 755 70M485 102 510 90M645 150 700 170 735 200M610 180H640" />
      <path stroke="#f2b5bd" strokeWidth="5" d="M400 140 470 134 495 128M400 140 392 210M430 155 500 140 510 160 490 185 440 180 430 155M390 210 455 205 480 215 500 190 470 185" />
    </g>
    <path transform="translate(1320 0)" fill="none" stroke="#b9b0cf" strokeWidth="9" strokeDasharray="5 3" d="M1158 668 1240 640" />

    <Strokes data={WATERWAYS} color={WATER} width="11" />
    <path transform="translate(1320 0)" d={WATERWAYS.ne[0]} fill="none" stroke="#9a8fb8" strokeWidth="4" strokeDasharray="12 5" />
    <Strokes data={WHITE_ROADS} color="#c4c4c4" width="9" />
    <Strokes data={WHITE_ROADS} color="#ffffff" width="6.5" />
    <Strokes data={YELLOW_ROADS} color="#c9d48c" width="13" />
    <Strokes data={ORANGE_ROADS} color="#d9ad62" width="14" />
    <Strokes data={YELLOW_ROADS} color="#f3f9b0" width="9.5" />
    <Strokes data={ORANGE_ROADS} color="#f9d89c" width="10" />
    <Strokes data={BORDERS} color="#a883a8" width="5" dash="10 5 3 5" opacity="0.8" />
    <Strokes data={TRAMS} color="#6f6f6f" width="3.5" />
    <Strokes data={RAILS} color="#737373" width="6.5" />
    <Strokes data={RAILS} color="#cfcfcf" width="2" dash="18 10" />

    <g stroke="#4a8cf0" strokeWidth="3" opacity="0.9">
      <path d="M320 262h12M245 347h12M440 378h10M630 432h12M545 455h10M590 516h14M790 575h20M830 592h14M850 605h12M860 628h16M1015 632h14M1050 656h12M1015 683h14M780 548h12M200 550h10M400 572h12M1110 705h10M1755 298h12M1865 402h10M2105 253h8M2330 625h10M2430 1108h18M2440 1120h14M2425 1132h16M2600 985h16M2590 1000h14" />
    </g>

    <g fill="#d18f42">
      <path d="M2463 240 2474 261H2452ZM2496 268 2507 289H2485ZM1950 1162 1961 1182H1939Z" />
    </g>
    <path d="M1943 1152 1957 1149 1970 1153 1960 1159 1957 1168 1952 1158Z" fill="#222" />
    <g fill="#7b60ae">
      <rect x="1757" y="1020" width="13" height="13" /><rect x="1881" y="881" width="13" height="13" />
      <rect x="2063" y="1146" width="13" height="13" /><rect x="1359" y="1119" width="13" height="13" />
    </g>
    <Plane x={2556} y={634} />
    <Plane x={666} y={852} />

    <g fill="#333" stroke="#fff" strokeOpacity="0.75" strokeWidth="6" paintOrder="stroke" strokeLinejoin="round">
      {LABELS.map(([q, x, y, w, text, size = 32]) => (
        <text key={text + x} x={ORIGIN[q][0] + x} y={ORIGIN[q][1] + y + 1} fontSize={size} textLength={w} lengthAdjust="spacingAndGlyphs">{text}</text>
      ))}
      <g fontStyle="italic">
        <text x="265" y="322" fontSize="30" textLength="90" lengthAdjust="spacingAndGlyphs" fill="#5a86c4">Jezioro</text>
        <text x="260" y="356" fontSize="30" textLength="100" lengthAdjust="spacingAndGlyphs" fill="#5a86c4">Kierskie</text>
        <text x="626" y="1157" fontSize="30" textLength="232" lengthAdjust="spacingAndGlyphs" fill="#5c8560">Lasek Marceliński</text>
      </g>
      <text transform="translate(410 1146) rotate(52)" fontSize="30" textLength="104" lengthAdjust="spacingAndGlyphs" fill="#93709a">Poznań</text>
    </g>

    <Shield x={890} y={593} w={62} fill="#f6e5ca" stroke="#dcb98a" text="92" />
    <Shield x={1301} y={488} w={80} fill="#eff5cf" stroke="#bcc98a" text="433" />
    <Shield x={1958} y={321} w={80} fill="#eff5cf" stroke="#bcc98a" text="196" />

    <path d="M1338 812 1372 742c12-20 38-14 34 6s-28 40-66 64z" fill="#000" opacity="0.3" filter="url(#soft)" />
    <g transform="translate(1298.500 695) scale(3)">
      <path d="M12.500.5C5.900.5.5 5.900.5 12.500c0 2.900.9 5 2.300 7.400L12.500 40.500l9.700-20.600c1.400-2.400 2.300-4.500 2.300-7.400C24.500 5.900 19.100.5 12.500.5z" fill="url(#pin)" stroke="#2e6cb0" />
      <circle cx="12.500" cy="12.300" r="4.500" fill="#fff" stroke="#2e6cb0" strokeWidth="0.7" />
    </g>
  </svg>
);

const NAV = ["Start", "Ochrona UV", "Testy", "Pielęgnacja", "Nawilżenie", "Sposób użycia", "Skład", "Kontakt", "Tu jesteśmy"];

export default function App() {
  return (
    <>
      <GlobalStyle />
      <Screen>
        <DesktopEdge />
        <Browser>
          <TabStrip>
            <TabSearch><Sharp w={10} h={6} color="#e4dce6" sw={2}><path d="M1 1l4 4 4-4" /></Sharp></TabSearch>
            <Tab>
              <svg width="16" height="16" viewBox="0 0 16 16">
                <rect width="16" height="16" fill="#54415e" />
                <path d="M5 13C6 6 10 1 16 1c0 6-2 11-9 14z" fill="#e9eee6" />
                <path d="M9 14c3-3 5-7 6-11l1 5c-1 4-3 6-7 7z" fill="#9a949c" />
                <path d="M0 15V1Q4 0 8 .5c3-.5 5 0 6 1C9 3 7 8 5 13c-1 2-4 3-5 2z" fill="#35b51b" />
                <path d="M1 12C1 7 3 3 8 2 5 5 4 8 3 13z" fill="#77dd3a" />
              </svg>
              <TabTitle>Equilibra SPF</TabTitle>
              <Sharp w={8} h={8} color="#e4dce6"><path d="M.5.5l7 7M7.500.5l-7 7" /></Sharp>
            </Tab>
            <NewTab><Sharp w={10} h={10} color="#d5ccd8"><path d="M5 0v10M0 5h10" /></Sharp></NewTab>
            <WindowButtons>
              <Sharp w={10} h={10} color="#8a828e" sw={2}><path d="M0 9h10" /></Sharp>
              <Sharp w={10} h={10} color="#8a828e" sw={2}><path d="M.7.700l8.600 8.600M9.300.700L.7 9.300" /></Sharp>
            </WindowButtons>
          </TabStrip>
          <Toolbar>
            <NavIcons>
              <Sharp w={20} color="#d3b9de"><path d="M16 8H5M10 2.500L4.500 8l5.500 5.500" /></Sharp>
              <Sharp w={20} color="#7c6b85"><path d="M4 8h11M10 2.500L15.500 8 10 13.500" /></Sharp>
              <Sharp w={20} color="#d3b9de"><path d="M15.300 9.500A5.600 5.600 0 1 1 14.500 4.500M15.500 2v4.500H11" /></Sharp>
            </NavIcons>
            <AddressBar>
              <SiteInfo>
                <Sharp w={14} h={14} color="#dccde2" sw={1.500}><circle cx="7" cy="7" r="6" /><path d="M7 6.200V10.200M7 3.700V5.200" /></Sharp>
              </SiteInfo>
              <Url><b>localhost:</b>5173/#composition</Url>
              <Sharp w={20} color="#cfc3d3" sw={1.500}><path d="M10 1.800l1.800 4.300 4.700.4-3.600 3 1.100 4.600-4-2.500-4 2.500 1.100-4.600-3.600-3 4.700-.4z" /></Sharp>
            </AddressBar>
            <Extensions>
              <Sharp w={18} h={18} color="#d5c6dc"><path d="M2 3.500h4.300a1.700 1.700 0 0 1 3.200 0H14.500v4.200a1.500 1.500 0 0 1 0 3V15.500H2v-3.500a2.400 2.400 0 0 0 0-5z" /></Sharp>
            </Extensions>
            <Divider $margin="0 16px 0 16px" />
            <Avatar>Sz</Avatar>
            <UpdateButton>
              New Chrome available
              <svg width="8" height="16"><g fill="#f0e0f5"><circle cx="4" cy="3" r="1.700" /><circle cx="4" cy="8" r="1.700" /><circle cx="4" cy="13" r="1.700" /></g></svg>
            </UpdateButton>
          </Toolbar>
          <BookmarkBar>
            <Sharp w={14} h={14} color="#c9bdcc" sw={1.600}><path d="M.8.800h4.400v4.400H.8zM8.800.800h4.400v4.400H8.800zM.8 8.800h4.400v4.400H.8zM8.800 8.800h4.400v4.400H8.800z" /></Sharp>
            <Divider $margin="0 16px 0 0" />
            <Sharp w={16} h={14} color="#c9bdcc" sw={1.500}><path d="M.8 12V2q0-.8.800-.8h4l1.800 2h7q.8 0 .8.800v8q0 .8-.8.800H1.600q-.8 0-.8-.8z" /></Sharp>
            <BookmarkLabel>All Bookmarks</BookmarkLabel>
          </BookmarkBar>

          <Viewport>
            <Page>
              <SiteNav>{NAV.map((n) => <NavLink key={n}>{n}</NavLink>)}</SiteNav>
              <Card>
                <CardTitle>Skontaktuj się z nami</CardTitle>
                <Field>
                  <Label>Imię i nazwisko</Label>
                  <Control><UserIcon /><Value>Szymon Jóźwiak</Value></Control>
                </Field>
                <Field>
                  <Label>Adres e-mail</Label>
                  <Control><MailIcon color="#bbb" /><Value>abcd@defg.pl</Value></Control>
                </Field>
                <Field>
                  <Label>Wiadomość</Label>
                  <Control $focused>
                    <MessageIcon />
                    <Value><Misspelt>Witam</Misspelt>, <Misspelt>proszę</Misspelt> o <Misspelt>kontakt</Misspelt>.<Caret /></Value>
                    <Grip width="8" height="8" viewBox="0 0 8 8" stroke="#555" strokeWidth="0.9"><path d="M0 8L8 0M4 8l4-4" /></Grip>
                  </Control>
                </Field>
                <SubmitButton><SendIcon />Wyślij wiadomość</SubmitButton>
                <CardFooter>
                  Możesz również skontaktować się z nami bezpośrednio przez e-mail:
                  <MailLink><MailIcon color={ORANGE} />equilibra@mail-kontaktowy.pl</MailLink>
                </CardFooter>
              </Card>
              <SectionTitle>Tu jesteśmy!</SectionTitle>
              <MapFrame>
                <CityMap />
                <ZoomControl>
                  <ZoomButton $first>+</ZoomButton>
                  <ZoomButton>−</ZoomButton>
                </ZoomControl>
                <Attribution>
                  <svg width="12" height="8" viewBox="0 0 12 8"><path fill="#5f50e1" d="M0 0h12v4H0z" /><path fill="#ffe000" d="M0 4h12v4H0z" /></svg>
                  <a>Leaflet</a> | © <a>OpenStreetMap</a>
                </Attribution>
              </MapFrame>
            </Page>
            <ScrollTrack>
              <Arrow $up />
              <ScrollThumb />
              <Arrow />
            </ScrollTrack>
          </Viewport>
        </Browser>
      </Screen>
    </>
  );
}
